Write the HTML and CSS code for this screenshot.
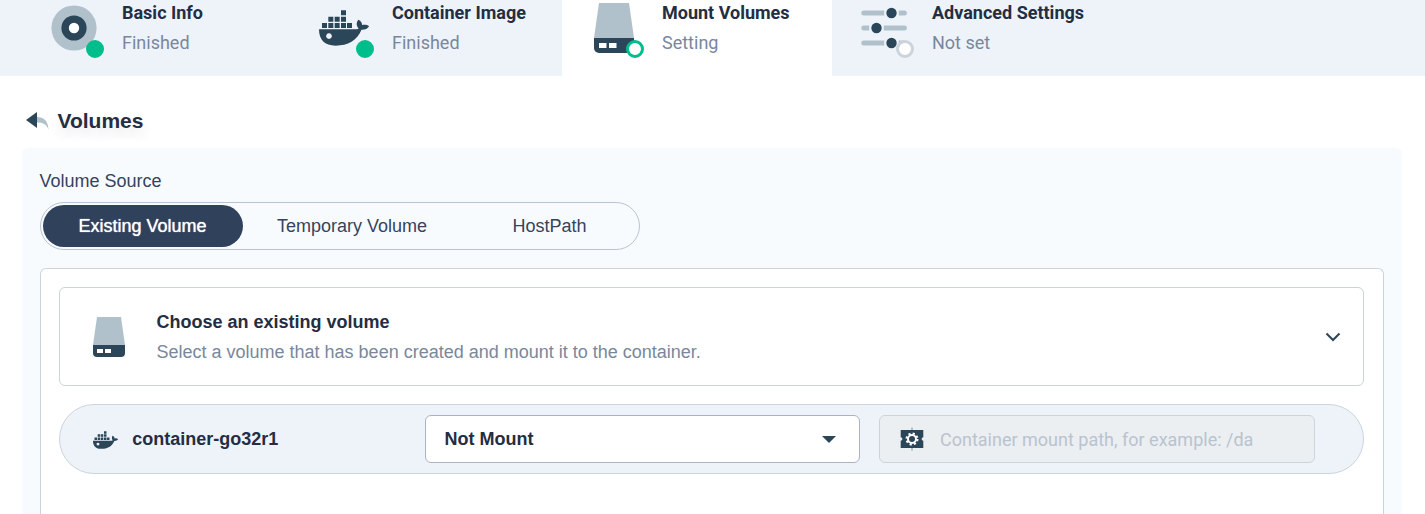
FILE: index.html
```html
<!DOCTYPE html>
<html lang="en">
<head>
<meta charset="utf-8">
<title>Mount Volumes</title>
<link rel="stylesheet" href="styles.css">
</head>
<body>
<svg class="defs" width="0" height="0" aria-hidden="true">
  <symbol id="docker" viewBox="57 30 152 108">
    <path class="dark" d="M66 69h15v15H66zM85 69h15v15H85zM104 69h15v15h-15zM123 69h15v15h-15zM141 69h15v15h-15zM85 50h15v15H85zM104 50h15v15h-15zM123 50h15v15h-15zM123 31h15v15h-15z"/>
    <path class="dark" fill-rule="evenodd" d="M57 88h110c6 0 8-1 8.500-3-7-7-7-18-.5-26 9 4 11 10 11.500 16 9-2 15-1 21 4-4 7-12 11-23 10.500-13 33-41 47.500-77.500 47.500-33 0-50-17-50-49zM87 100a8.500 8.500 0 1 0 .01 0z"/>
  </symbol>
  <symbol id="storage" viewBox="0 0 32 40">
    <path class="light" d="M4 0h24l4 28H0z"/>
    <path class="dark" d="M0 28h32v8a4 4 0 0 1-4 4H4a4 4 0 0 1-4-4z"/>
    <path fill="#fff" d="M4 32h6v4H4zM12 32h6v4h-6z"/>
  </symbol>
</svg>
<nav class="tabs">
  <div class="tab">
    <div class="tab-icon">
      <svg width="60" height="60" viewBox="0 0 60 60"><circle class="light" cx="30" cy="30" r="22.600"/><circle class="dark" cx="30" cy="30" r="12.600"/><circle fill="#fff" cx="30" cy="30" r="5.200"/></svg>
      <span class="dot done"></span>
    </div>
    <div class="tab-text"><strong>Basic Info</strong><span>Finished</span></div>
  </div>
  <div class="tab">
    <div class="tab-icon">
      <svg width="50.670" height="36"><use href="#docker"/></svg>
      <span class="dot done"></span>
    </div>
    <div class="tab-text"><strong>Container Image</strong><span>Finished</span></div>
  </div>
  <div class="tab active">
    <div class="tab-icon">
      <svg width="40" height="50"><use href="#storage"/></svg>
      <span class="dot current"></span>
    </div>
    <div class="tab-text"><strong>Mount Volumes</strong><span>Setting</span></div>
  </div>
  <div class="tab">
    <div class="tab-icon">
      <svg width="60" height="60" viewBox="0 0 60 60">
        <g class="light"><path d="M9.800 12.500h20.400v5H9.800a2.500 2.500 0 0 1 0-5zM44.800 12.500h5.600a2.500 2.500 0 0 1 0 5h-5.600zM9.800 27.500h5.400v5H9.800a2.500 2.500 0 0 1 0-5zM29.800 27.500h20.600a2.500 2.500 0 0 1 0 5H29.800zM9.800 42.500h20.400v5H9.800a2.500 2.500 0 0 1 0-5zM44.800 42.500h5.600a2.500 2.500 0 0 1 0 5h-5.600z"/></g>
        <g class="dark"><circle cx="37.500" cy="15" r="5.200"/><circle cx="22.500" cy="30" r="5.200"/><circle cx="37.500" cy="45" r="5.200"/></g>
      </svg>
      <span class="dot"></span>
    </div>
    <div class="tab-text"><strong>Advanced Settings</strong><span>Not set</span></div>
  </div>
</nav>
<main>
  <h1>
    <svg width="24" height="18" viewBox="0 0 24 18"><path class="light" d="M11 5c7 0 11 4 11.500 12.500C20 12 17 10.500 11 10.500z"/><path class="dark" d="M11 0v16L0 8z"/></svg>
    Volumes
  </h1>
  <section class="panel">
    <div class="label">Volume Source</div>
    <div class="switch">
      <button class="selected">Existing Volume</button><button>Temporary Volume</button><button>HostPath</button>
    </div>
    <div class="content">
      <div class="choose">
        <svg width="32" height="40"><use href="#storage"/></svg>
        <div class="choose-text"><strong>Choose an existing volume</strong><span>Select a volume that has been created and mount it to the container.</span></div>
        <svg width="16" height="10" viewBox="0 0 16 10"><path class="chevron" d="M1.500 1.500 8 8l6.500-6.500"/></svg>
      </div>
      <div class="container-row">
        <svg class="whale" width="25.330" height="18"><use href="#docker"/></svg>
        <strong class="name">container-go32r1</strong>
        <div class="select"><span>Not Mount</span><svg width="14" height="7"><path class="dark" d="M0 0h14L7 7z"/></svg></div>
        <div class="path">
          <svg width="24" height="24" viewBox="0 0 24 24">
            <path class="light" d="M11 .5h2v23h-2z"/>
            <path class="dark" d="M.7 3h22.600v7.300a1.700 1.700 0 0 0 0 3.400V21H.7v-7.300a1.700 1.700 0 0 0 0-3.400z"/>
            <circle class="teeth" cx="12" cy="12" r="5.500"/>
            <circle class="gear" cx="12" cy="12" r="4"/>
          </svg>
          <span>Container mount path, for example: /da</span>
        </div>
      </div>
    </div>
  </section>
</main>
</body>
</html>
```
FILE: styles.css
```css
* { box-sizing: border-box; }
body {
  display: flex;
  flex-direction: column;
  height: 100vh;
  margin: 0;
  background: #fff;
  color: #242e42;
  font: 18px/30px "Liberation Sans", Arial, sans-serif;
}
svg { display: block; flex: none; }
.defs { position: absolute; }
.dark { fill: #2b4559; }
.light { fill: #b1c1cc; }

.tabs {
  display: flex;
  flex: none;
  height: 76px;
  padding-left: 22px;
  background: #eef3fa;
  font-family: Roboto, sans-serif;
}
.tab {
  display: flex;
  align-items: flex-end;
  gap: 18px;
  width: 270px;
  padding: 0 0 18px 22px;
}
.tab.active { background: #fff; }
.tab-icon {
  position: relative;
  display: grid;
  place-items: center;
  width: 60px;
  height: 58px;
}
.tab-icon svg { margin: -1px 0; transform: translateY(-1px); }
.dot {
  position: absolute;
  right: 0;
  bottom: 0;
  width: 18px;
  height: 18px;
  border: 3px solid #ccd3db;
  border-radius: 50%;
  background: #fff;
}
.dot.current { border-color: #00be8c; }
.dot.done { border-color: #00be8c; background: #00be8c; }
.tab-text { display: flex; flex-direction: column; }
.tab-text strong { font-weight: 700; }
.tab-text span, .choose-text span { color: #79879c; }

main {
  display: flex;
  flex: 1;
  flex-direction: column;
  min-height: 0;
  padding: 27px 23px 0 22px;
}
h1 {
  display: flex;
  flex: none;
  align-items: center;
  gap: 8px;
  height: 36px;
  margin: 0 0 9px;
  padding-left: 3.500px;
  font-size: 21px;
  line-height: 36px;
  text-shadow: 0 6px 12px rgba(36, 46, 66, .12);
}
.panel {
  display: flex;
  flex: 1;
  flex-direction: column;
  padding: 18px 18px 0;
  border-radius: 6px 6px 0 0;
  background: #f8fbfe;
}
.label { height: 36px; margin-left: -.5px; color: #36435c; }
.switch {
  display: flex;
  width: 600px;
  height: 48px;
  padding: 2px;
  border: 1px solid #b8c5d1;
  border-radius: 24px;
}
.switch button {
  width: 200px;
  flex: none;
  margin: 0;
  padding: 0;
  border: 0;
  border-radius: 21px;
  background: none;
  color: #36435c;
  font: inherit;
}
.switch button:nth-child(2) { width: 218px; }
.switch button:nth-child(3) { width: 177px; }
.switch .selected { padding-right: 1px; background: #30415b; color: #fff; text-shadow: 0 0 1px #fff; }
.content {
  flex: 1;
  margin-top: 18px;
  padding: 18px 19px 0 18px;
  border: 1px solid #ccd3db;
  border-bottom: 0;
  border-radius: 6px 6px 0 0;
  background: #fff;
}
.choose {
  display: flex;
  align-items: center;
  height: 99px;
  padding: 0 22px 0 33px;
  border: 1px solid #ccd3db;
  border-radius: 6px;
}
.choose-text {
  display: flex;
  flex: 1;
  flex-direction: column;
  margin-left: 31.500px;
}
.chevron { fill: none; stroke: #2b4559; stroke-width: 2; }
.container-row {
  display: flex;
  align-items: center;
  height: 70px;
  margin-top: 18px;
  padding: 0 48px 0 33px;
  border: 1px solid #ccd3db;
  border-radius: 35px;
  background: #eef3fa;
}
.whale { margin-top: 2px; }
.name { flex: 1; margin-left: 14px; }
.select, .path {
  display: flex;
  align-items: center;
  height: 48px;
  border: 1px solid #abb4be;
  border-radius: 6px;
}
.select {
  justify-content: space-between;
  width: 435px;
  padding: 0 23px 0 18.500px;
  background: #fff;
  font-weight: 700;
}
.path {
  gap: 16px;
  width: 436px;
  margin-left: 19px;
  padding-left: 20px;
  border-color: #ccd3db;
  background: #ebeff2;
  color: #b9c3cf;
  font-family: Roboto, sans-serif;
}
.path span { padding-top: 1px; }
.teeth { fill: none; stroke: #fff; stroke-width: 2; stroke-dasharray: 2.160; }
.gear { fill: none; stroke: #fff; stroke-width: 2; }
```
